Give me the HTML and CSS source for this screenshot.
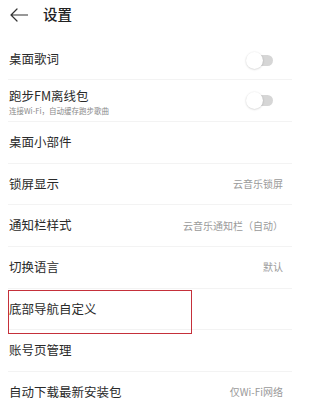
FILE: index.html
```html
<!DOCTYPE html>
<html lang="zh-CN">
<head>
<meta charset="utf-8">
<title>设置</title>
<link rel="stylesheet" href="styles.css">
</head>
<body>
<div class="page">
  <header class="header">
    <svg class="back" width="18" height="14" viewBox="0 0 18 14" aria-hidden="true">
      <path d="M17.5 7 H1 M7 1 L1 7 L7 13" fill="none" stroke="#333" stroke-width="1.2" stroke-linecap="round" stroke-linejoin="round"/>
    </svg>
    <h1 class="title">设置</h1>
  </header>
  <ul class="list">
    <li class="row">
      <span class="label">桌面歌词</span>
      <span class="toggle toggle-low"></span>
    </li>
    <li class="row">
      <div class="label-group">
        <span class="label">跑步FM离线包</span>
        <span class="sub">连接Wi-Fi，自动缓存跑步歌曲</span>
      </div>
      <span class="toggle"></span>
    </li>
    <li class="row"><span class="label">桌面小部件</span></li>
    <li class="row"><span class="label">锁屏显示</span><span class="value">云音乐锁屏</span></li>
    <li class="row"><span class="label">通知栏样式</span><span class="value">云音乐通知栏（自动）</span></li>
    <li class="row"><span class="label">切换语言</span><span class="value">默认</span></li>
    <li class="row"><span class="label">底部导航自定义</span></li>
    <li class="row"><span class="label">账号页管理</span></li>
    <li class="row"><span class="label">自动下载最新安装包</span><span class="value">仅Wi-Fi网络</span></li>
  </ul>
  <div class="highlight"></div>
</div>
</body>
</html>
```
FILE: styles.css
```css
* { box-sizing: border-box; }
html, body {
  margin: 0;
  padding: 0;
  background: #fff;
}
body {
  font-family: "Noto Sans CJK SC", "Noto Sans", sans-serif;
  color: #2a2a2a;
}
.page {
  position: relative;
  width: 292px;
  height: 412px;
  overflow: hidden;
}
.header {
  height: 28px;
  display: flex;
  align-items: center;
  padding-left: 10px;
}
.back {
  display: block;
  margin-top: 1px;
}
.title {
  margin: 0 0 0 15px;
  font-size: 14.5px;
  font-weight: 500;
  line-height: 1;
  color: #222;
}
.list {
  list-style: none;
  margin: 10.5px 0 0 0;
  padding: 0 0 0 8px;
}
.row {
  height: 41.7px;
  display: flex;
  align-items: center;
  justify-content: space-between;
  padding: 0 9px 0 1px;
  border-bottom: 1px solid #f3f3f3;
}
.label {
  font-size: 12.5px;
  line-height: 1;
  color: #2a2a2a;
}
.label-group {
  display: flex;
  flex-direction: column;
  gap: 4px;
  margin-top: 3px;
}
.sub {
  font-size: 7.5px;
  line-height: 1;
  color: #8a8a8a;
}
.value {
  font-size: 10px;
  line-height: 1;
  color: #9a9a9a;
}
.toggle {
  position: relative;
  width: 22px;
  height: 11px;
  margin-right: 10px;
  border-radius: 6px;
  background: #d6d6d6;
}
.toggle-low {
  margin-top: 3px;
}
.toggle::before {
  content: "";
  position: absolute;
  left: -5px;
  top: -3px;
  width: 17px;
  height: 17px;
  border-radius: 50%;
  background: #fff;
  box-shadow: 0 0.5px 2px rgba(0, 0, 0, 0.22);
}
.highlight {
  position: absolute;
  left: 8px;
  top: 290px;
  width: 184px;
  height: 44px;
  border: 1.6px solid #c5303a;
}
```
